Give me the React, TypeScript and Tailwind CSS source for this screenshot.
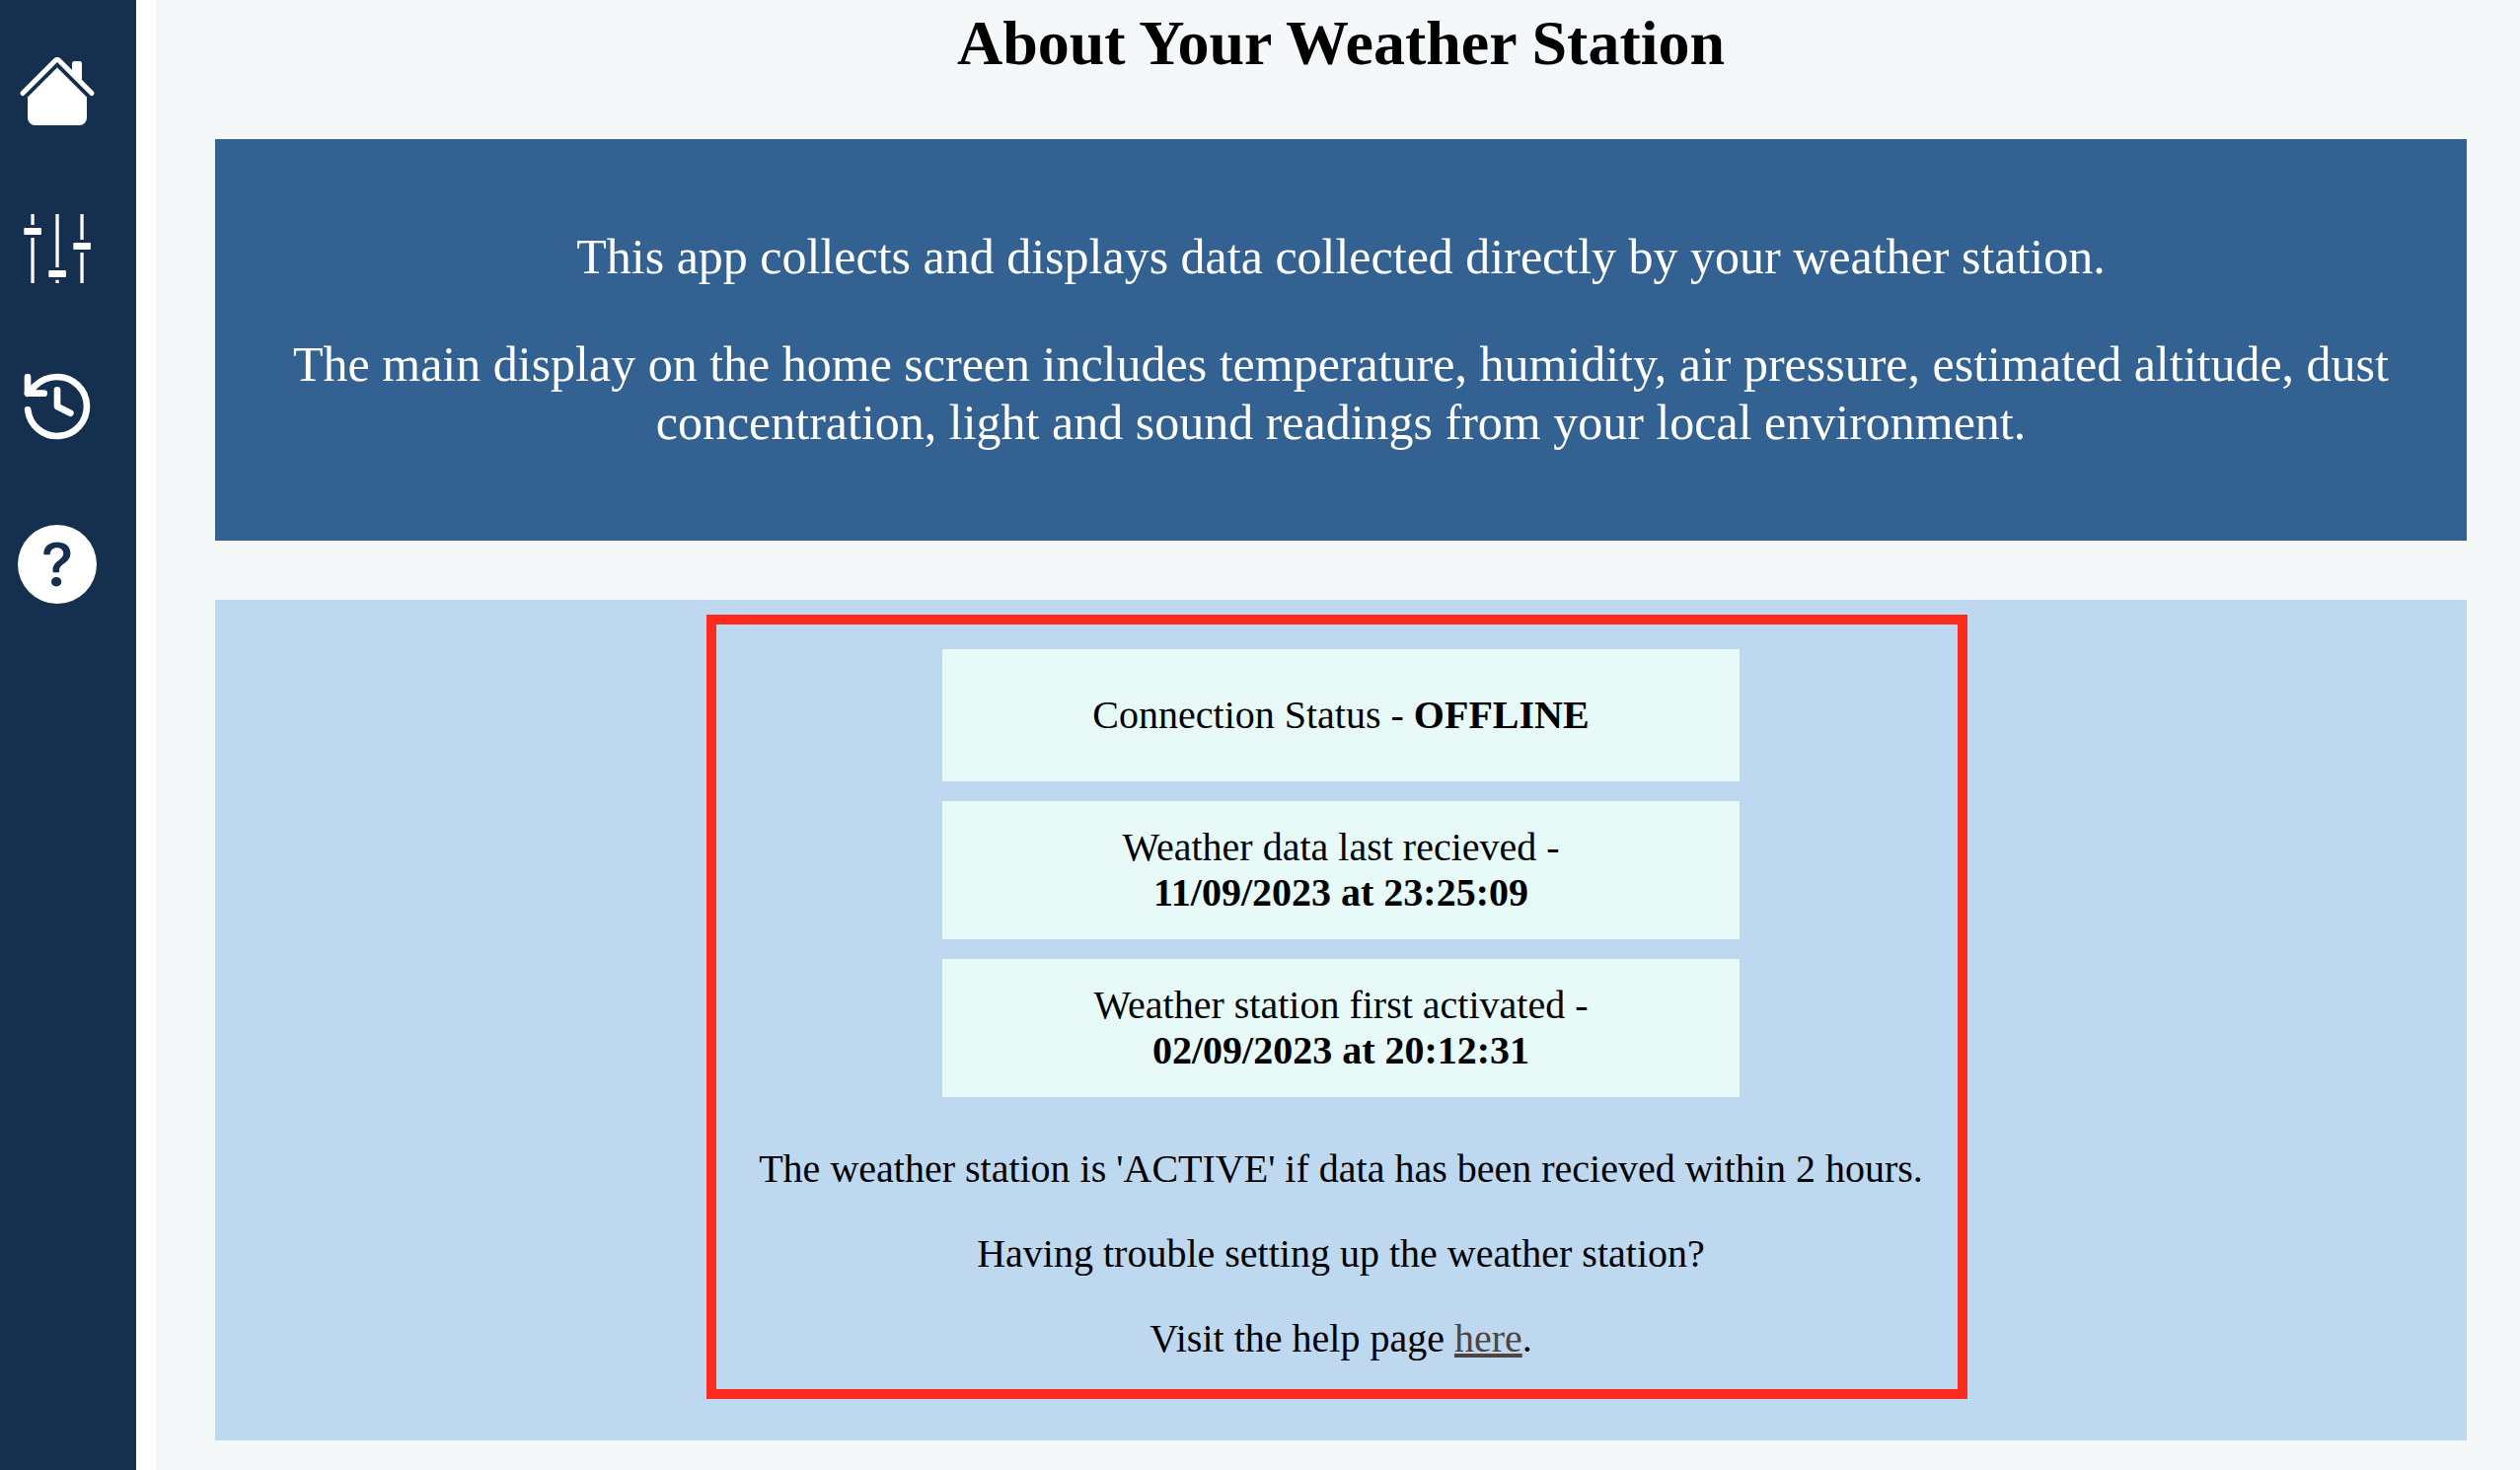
import { BsHouseFill, BsQuestionCircleFill } from "react-icons/bs";

function SlidersIcon() {
  return (
    <svg viewBox="0 0 80 80" fill="currentColor" className="size-20">
      <path d="M13.4 5h3.3v11h-3.3zM13.4 29h3.3v46h-3.3zM38.4 5h3.3v54h-3.3zM38.4 71.7h3.3V75h-3.3zM63.4 5h3.3v26h-3.3zM63.4 44h3.3v31h-3.3z" />
      <rect x="6.3" y="19" width="17.6" height="7" rx="0.8" />
      <rect x="31.3" y="62" width="17.6" height="7" rx="0.8" />
      <rect x="56.3" y="34" width="17.6" height="7" rx="0.8" />
    </svg>
  );
}

function HistoryIcon() {
  return (
    <svg
      viewBox="0 0 24 24"
      fill="none"
      stroke="currentColor"
      strokeWidth="2"
      strokeLinecap="round"
      strokeLinejoin="round"
      className="size-20"
    >
      <path d="M3.05 13A9 9 0 1 0 12 3a9.75 9.75 0 0 0-6.74 2.74L3 8" />
      <path d="M3 3v5h5M12 7v5l4 2" />
    </svg>
  );
}

function StatusCard({ label, value, tall }: { label: string; value: string; tall?: boolean }) {
  return (
    <div
      className={
        tall
          ? "flex h-[140px] w-[808px] flex-col items-center justify-center bg-[#e7faf8]"
          : "flex h-[134px] w-[808px] items-center justify-center gap-2.5 bg-[#e7faf8]"
      }
    >
      <span>{label}</span>
      <b>{value}</b>
    </div>
  );
}

export default function App() {
  return (
    <div className="flex h-[1490px] w-[2554px] overflow-hidden bg-white font-['Liberation_Serif',serif] text-black">
      <nav className="flex w-[138px] shrink-0 flex-col gap-20 bg-[#152f4f] pt-[52px] pl-[18px] text-white">
        <BsHouseFill className="size-20" />
        <SlidersIcon />
        <HistoryIcon />
        <BsQuestionCircleFill className="size-20" />
      </nav>
      <main className="ml-5 flex flex-1 flex-col bg-[#f4f8f9] pr-[54px] pl-[60px] text-center">
        <h1 className="h-[141px] pt-[7px] text-[64px] leading-[74px] font-bold">About Your Weather Station</h1>
        <section className="flex h-[407px] flex-col gap-[50px] bg-[#336191] pt-[90px] text-[50px] leading-[59px] text-white">
          <p>This app collects and displays data collected directly by your weather station.</p>
          <p>
            The main display on the home screen includes temperature, humidity, air pressure, estimated altitude, dust
            <br />
            concentration, light and sound readings from your local environment.
          </p>
        </section>
        <section className="mt-[60px] h-[852px] bg-[#bdd8ef] pt-[15px]">
          <div className="ml-[498px] flex h-[795px] w-[1278px] flex-col items-center border-[10px] border-[#fd2b1e] pt-[25px] pl-2 text-[40px] leading-[46px]">
            <div className="flex flex-col gap-5">
              <StatusCard label="Connection Status -" value="OFFLINE" />
              <StatusCard label="Weather data last recieved -" value="11/09/2023 at 23:25:09" tall />
              <StatusCard label="Weather station first activated -" value="02/09/2023 at 20:12:31" tall />
            </div>
            <div className="mt-[50px] flex flex-col gap-10 whitespace-nowrap">
              <p>The weather station is 'ACTIVE' if data has been recieved within 2 hours.</p>
              <p>Having trouble setting up the weather station?</p>
              <p>
                Visit the help page{" "}
                <a href="#help" className="text-[#4f4442] underline decoration-4 underline-offset-2">
                  here
                </a>
                .
              </p>
            </div>
          </div>
        </section>
      </main>
    </div>
  );
}
